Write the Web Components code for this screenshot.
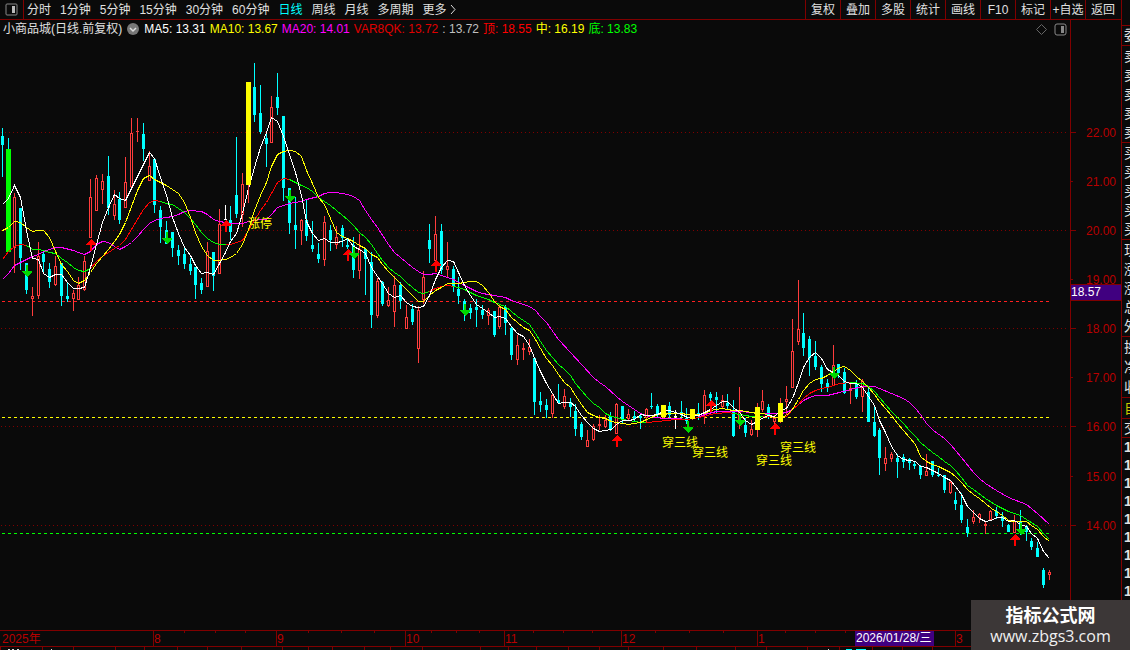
<!DOCTYPE html>
<html lang="zh-CN">
<head>
<meta charset="utf-8">
<title>小商品城 日线</title>
<style>
  body {
    --bg: #0a0a0a;
    --line: #800000;
    --label: #b80000;
    margin: 0;
    background: var(--bg);
    color: #e0e0e0;
    font: 12px/18px "Liberation Sans", "Noto Sans CJK SC", sans-serif;
    overflow: hidden;
  }
</style>
</head>
<body>
<stock-screen>
  <tool-bar slot="toolbar"></tool-bar>
  <indicator-legend slot="legend">
    <span>小商品城(日线.前复权)</span>
  </indicator-legend>
  <kline-plot slot="plot"></kline-plot>
  <price-axis slot="price"></price-axis>
  <date-axis slot="date"></date-axis>
  <quote-strip slot="quotes"></quote-strip>
  <site-badge slot="badge">
    <strong>指标公式网</strong>
    <a slot="link" href="#site">www.zbgs3.com</a>
  </site-badge>
</stock-screen>

<script>
const SVG_NS = "http://www.w3.org/2000/svg";
const STEP = 5.846;
const FIRST_X = 2.95;

// one row per bar: kind, high, body top, body bottom, low
// c = falling, r = rising, g / y = marked bar, w = plain white wick
const BARS = `
c 128 136 145 177|g 138 149 252 252|r 193 197 248 273|c 208 208 258 270|c 263 263 290 294
r 287 296 299 316|r 242 256 296 299|c 251 254 262 272|c 263 269 282 288|r 256 266 285 286
c 263 263 296 306|c 282 296 299 302|r 290 293 299 311|r 277 285 300 300|r 256 261 290 291
r 179 197 238 238|r 175 178 211 211|r 174 181 190 204|c 156 176 208 215|r 190 204 216 220
c 192 199 220 224|r 157 182 208 208|r 118 133 187 187|r 118 131 132 142|c 123 134 149 161
r 151 166 181 181|c 159 159 205 213|c 206 210 227 243|c 221 230 244 244|c 232 232 248 257
c 245 250 256 265|c 248 254 264 269|c 258 264 271 275|c 267 267 285 299|c 278 283 290 294
r 242 251 287 287|c 252 252 276 291|r 209 224 274 274|w 205 205 220 220|c 206 220 232 240
c 137 195 214 218|r 173 184 215 227|y 82 82 185 203|c 63 87 115 122|c 85 113 132 134
c 134 138 144 167|r 96 107 143 143|c 73 97 108 115|c 116 116 188 201|c 188 188 223 234
c 197 225 230 249|r 219 220 231 245|c 199 220 236 241|c 221 245 249 252|c 243 254 259 263
r 216 222 260 266|c 225 230 240 251|r 226 237 245 249|c 225 228 238 247|c 239 245 247 249
c 237 245 270 278|r 234 249 271 279|c 249 249 259 295|c 252 262 315 328|r 278 281 316 318
c 281 282 304 306|r 287 300 306 307|r 276 285 312 327|c 282 285 301 309|r 305 317 329 329
c 304 309 322 325|r 306 310 349 363|r 271 277 300 304|c 224 240 249 263|r 216 234 261 261
c 224 231 270 274|r 242 266 270 277|c 266 269 287 292|c 277 289 296 304|c 299 301 310 321
c 304 308 313 319|c 299 307 310 327|c 305 310 315 319|r 308 310 316 325|c 311 311 335 337
r 305 307 327 329|c 305 307 323 335|c 326 328 355 360|r 335 345 360 365|r 343 348 350 360
r 339 347 352 355|c 358 358 402 415|c 392 401 405 412|c 399 405 410 418|r 394 395 414 418
c 384 400 403 404|r 389 396 407 409|c 398 402 407 417|c 404 411 429 436|c 422 424 437 440
r 430 440 447 447|r 424 426 440 441|r 415 424 426 430|r 415 420 427 428|c 412 416 430 431
r 403 404 434 434|c 406 406 420 424|r 409 414 419 420|c 411 416 419 421|c 414 416 418 429
r 408 409 418 422|c 393 406 407 409|c 404 406 414 417|y 405 405 417 418|c 402 406 415 418
w 410 416 417 429|c 401 412 413 420|c 408 418 421 424|y 409 409 419 420|c 403 413 416 420
r 390 395 415 424|c 392 394 398 412|c 392 397 400 413|r 395 400 407 409|c 394 403 406 410
c 400 410 436 437|r 387 412 424 429|c 418 425 433 437|r 420 429 435 436|y 403 407 430 437
r 390 401 410 412|c 404 407 415 419|r 415 418 422 424|y 398 403 422 423|r 386 399 402 415
r 319 351 388 388|r 280 329 342 345|c 313 333 348 356|c 336 339 358 376|c 341 356 367 370
c 365 367 384 392|c 379 383 387 392|r 345 365 386 386|c 364 364 373 378|c 368 372 393 394
r 382 388 391 404|c 380 383 397 399|r 379 381 397 412|c 386 392 422 422|c 405 422 436 437
c 428 430 458 475|r 447 458 464 471|r 452 454 459 462|c 454 458 462 478|c 454 457 462 468
c 458 459 463 470|c 461 464 466 469|c 465 466 475 479|r 454 471 476 476|c 461 461 475 477
c 468 475 476 477|c 475 475 490 493|r 481 482 493 494|c 492 500 504 510|c 493 505 520 523
c 519 527 533 537|r 510 517 522 524|r 513 514 518 523|r 522 524 526 534|r 510 511 520 520
c 507 511 516 519|c 512 516 521 527|c 524 525 532 532|r 515 521 533 533|c 510 522 530 535
c 525 526 532 541|c 538 541 547 550|c 542 548 557 557|c 568 570 585 588|r 570 572 575 580`
  .trim().split(/[|\n]/).map(row => row.split(" "));

const MA5 = "2,204 8,198 14,185 20,197 26,230 32,258 38,259 43,273 49,277 55,274 61,274 67,282 73,288 78,288 84,287 90,267 96,244 102,222 108,207 114,194 119,198 125,200 131,188 137,176 143,164 149,152 154,158 160,177 166,195 172,217 178,233 184,247 190,255 195,265 201,273 207,272 213,274 219,263 225,252 230,241 236,233 242,213 248,188 254,167 260,147 266,132 271,117 277,121 283,136 289,154 295,172 301,195 306,221 312,233 318,240 324,238 330,242 336,242 342,241 347,238 353,246 359,249 365,253 371,267 377,276 382,283 388,293 394,297 400,295 406,302 412,306 418,307 423,306 429,295 435,279 441,267 447,260 453,261 458,272 464,285 470,295 476,304 482,308 488,312 494,317 499,316 505,318 511,326 517,333 523,336 529,345 535,360 540,371 546,383 552,393 558,403 564,402 570,402 575,406 581,415 587,422 593,428 599,431 605,430 611,429 616,424 622,420 628,420 634,419 640,414 646,415 651,415 657,414 663,411 669,410 675,412 681,414 687,417 692,416 698,415 704,412 710,409 716,405 722,401 727,401 733,407 739,412 745,420 751,424 757,421 763,417 768,415 774,416 780,410 786,408 792,398 798,382 803,367 809,357 815,352 821,358 827,369 833,372 839,376 844,381 850,383 856,383 862,387 868,396 874,405 879,420 885,432 891,446 897,455 903,459 909,460 915,461 920,466 926,467 932,470 938,473 944,477 950,480 955,486 961,494 967,506 973,512 979,518 985,521 991,520 996,517 1002,517 1008,521 1014,520 1020,524 1026,526 1031,533 1037,538 1043,551 1049,558";
const MA10 = "2,230 8,227 14,221 20,222 26,227 32,231 38,230 43,230 49,237 55,251 61,264 67,271 73,280 78,283 84,280 90,272 96,263 102,256 108,249 114,241 119,234 125,222 131,206 137,190 143,178 149,175 154,179 160,182 166,185 172,189 178,193 184,202 190,217 195,232 201,246 207,255 213,260 219,260 225,259 230,257 236,253 242,244 248,229 254,210 260,195 266,182 271,166 277,154 283,151 289,150 295,151 301,156 306,170 312,183 318,197 324,204 330,218 336,232 342,236 347,238 353,241 359,245 365,248 371,254 377,257 382,264 388,271 394,277 400,283 406,289 412,295 418,301 423,301 429,295 435,290 441,287 447,283 458,283 464,282 470,281 476,281 482,285 488,292 494,301 499,306 505,309 511,317 517,322 523,327 529,330 535,339 540,348 546,358 552,365 558,374 564,382 570,387 575,395 581,404 587,412 593,415 599,417 605,418 611,421 616,422 622,423 628,424 634,423 640,422 646,419 651,417 657,414 663,414 669,413 681,413 687,414 698,414 704,413 710,410 716,409 722,408 727,409 733,410 739,410 745,411 751,412 757,413 763,413 768,415 774,417 780,417 786,415 792,409 798,399 803,390 809,383 815,379 821,378 827,375 833,371 839,367 844,366 850,370 856,376 862,381 868,387 874,394 879,401 885,408 891,415 897,423 903,430 909,437 915,444 920,456 926,461 932,464 938,466 944,469 950,472 955,476 961,482 967,489 973,494 979,498 985,503 991,508 996,511 1002,515 1008,520 1014,521 1026,521 1031,525 1037,529 1043,536 1049,541";
const MA20 = "2,279 8,273 14,265 20,262 26,259 32,256 38,254 43,251 49,249 55,247 61,247 73,250 78,252 84,254 90,251 96,244 102,241 108,242 114,246 119,249 125,246 131,242 137,236 143,229 149,223 154,220 160,218 172,216 178,214 184,211 190,210 201,211 207,214 213,219 219,221 225,222 230,223 242,223 248,221 254,220 260,219 266,219 271,214 277,207 283,205 289,203 301,201 306,199 318,196 324,193 330,192 336,192 347,194 353,196 359,200 365,210 371,219 377,227 388,244 394,252 400,257 412,267 418,271 423,274 429,274 435,273 441,275 453,279 464,285 476,291 482,293 494,295 505,297 511,300 523,304 529,306 535,310 540,316 546,322 558,339 570,352 581,364 593,377 599,382 605,386 616,396 622,401 628,405 634,409 640,413 646,415 651,417 657,417 663,418 675,418 687,419 698,417 704,414 716,411 727,411 739,411 751,412 763,413 780,413 786,412 792,409 798,404 803,400 809,397 815,395 827,395 839,392 850,389 862,386 874,386 879,388 891,393 903,398 909,402 915,408 920,414 926,423 933,430 944,438 950,444 961,457 973,472 979,478 985,483 996,490 1008,497 1026,504 1037,513 1049,524";
// the trend line changes colour each time it turns
const TREND = [
  ["#f00", "2,259 8,251 14,246 20,244 26,245"],
  ["#0f0", "26,245 32,249 38,249 43,250 49,252 55,253 61,258 67,262 73,267 78,270 84,271 90,268"],
  ["#f00", "90,268 96,261 102,256 108,252 114,248 119,245 125,239 131,229 137,219 143,209 149,202 154,200 160,201"],
  ["#0f0", "160,201 166,203 172,204 178,208 184,212 190,218 195,224 201,232 207,238 213,242 219,244 225,244"],
  ["#f00", "225,244 230,244 236,242 242,240 248,230 254,220 260,210 266,202 271,193 277,182 283,178 289,179"],
  ["#0f0", "289,179 295,182 301,185 306,187 312,191 318,197 324,201 330,205 336,210 342,215 347,219 353,225 359,232 365,237 371,244 377,253 382,260 388,267 394,272 400,276 406,282 412,287 418,292 423,293 429,291"],
  ["#f00", "429,291 435,288 441,286 447,285 453,286"],
  ["#0f0", "453,286 458,287 464,289 476,295 488,299 494,302 505,306 511,311 517,316 523,320 529,324 535,333 540,341 546,350 552,357 558,364 564,369 570,375 575,383 581,390 587,397 593,403 599,407 605,413 611,416 616,417 622,419 628,420 634,421 640,422 646,422"],
  ["#f00", "646,422 657,421 675,419 687,419 698,417 704,416 710,414 716,413 727,412 733,413"],
  ["#0f0", "733,413 739,414 745,415 751,416 763,416"],
  ["#f00", "763,416 780,417 786,416 792,409 798,404 803,398 809,393 815,390 821,388 827,387 833,385 839,383 850,382"],
  ["#0f0", "850,382 862,383 868,386 874,391 879,397 885,404 891,411 897,417 903,423 909,430 915,436 920,442 926,447 932,452 938,456 944,461 950,465 955,470 961,477 967,485 973,489 985,498 996,505 1008,511 1014,513 1020,515 1026,519 1037,526 1043,533 1049,539"]
];

const LEVELS = [[301, "#ff2020"], [417, "#ffff00"], [533, "#00ff00"]];
const BUYS = [[91, 239], [226, 220], [348, 249], [436, 260], [617, 435], [711, 400], [775, 423], [1015, 534]];
const SELLS = [[27, 277], [167, 244], [290, 202], [354, 259], [465, 316], [688, 433], [740, 426], [834, 379], [1021, 535]];
const NOTES = [[248, 228, "涨停"], [662, 447, "穿三线"], [692, 457, "穿三线"], [756, 465, "穿三线"], [780, 452, "穿三线"]];
const PRICES = [[132, "22.00"], [181, "21.00"], [230, "20.00"], [279, "19.00"], [328, "18.00"], [377, "17.00"], [426, "16.00"], [476, "15.00"], [525, "14.00"]];
const MONTHS = [[153, "8"], [276, "9"], [405, "10"], [504, "11"], [621, "12"], [757, "1"], [955, "3"]];
const WEEK_TICKS = [184, 215, 245, 308, 341, 374, 431, 456, 479, 533, 563, 592, 655, 689, 723, 785, 815, 845];
const TAB_TICKS = [0, 42, 73, 115, 144, 177, 207, 241, 282, 308, 332, 364, 390, 422, 480, 508, 536, 568, 599, 628, 663, 696, 735, 766, 807, 839, 872, 902, 932];

const svgNode = (name, attrs, text = "") => {
  const node = document.createElementNS(SVG_NS, name);
  Object.entries(attrs).forEach(([key, value]) => node.setAttribute(key, value));
  node.textContent = text;
  return node;
};

class StockScreen extends HTMLElement {
  constructor() {
    super();
    this.attachShadow({ mode: "open" });
  }

  static get styles() {
    return /* css */`
      :host {
        display: grid;
        grid-template-columns: 1fr 9px;
        height: 100vh;
        position: relative;
      }

      main {
        display: flex;
        flex-direction: column;
        min-width: 0;
        min-height: 0;
      }

      .chart {
        flex: 1;
        display: grid;
        grid-template-columns: 1fr 51px;
        min-height: 0;
      }

      .left {
        display: flex;
        flex-direction: column;
        min-width: 0;
        min-height: 0;
      }
    `;
  }

  connectedCallback() {
    this.shadowRoot.innerHTML = /* html */`
    <style>${StockScreen.styles}</style>
    <main>
      <slot name="toolbar"></slot>
      <div class="chart">
        <div class="left">
          <slot name="legend"></slot>
          <slot name="plot"></slot>
        </div>
        <slot name="price"></slot>
      </div>
      <slot name="date"></slot>
    </main>
    <slot name="quotes"></slot>
    <slot name="badge"></slot>`;
  }
}

class ToolBar extends HTMLElement {
  constructor() {
    super();
    this.attachShadow({ mode: "open" });
  }

  static get styles() {
    return /* css */`
      :host {
        display: flex;
        justify-content: space-between;
        height: 19px;
        border-bottom: 1px solid var(--line);
      }

      button {
        padding: 0;
        border: 0;
        background: none;
        color: inherit;
        font: inherit;
        white-space: nowrap;
      }

      nav {
        display: flex;
        gap: 9px;
      }

      .panel {
        width: 24px;
        padding-left: 5px;
        border-right: 1px solid var(--line);
        box-sizing: border-box;
        display: flex;
        align-items: center;
        margin-right: -6px;
      }

      .active {
        color: #00ffff;
      }

      .more {
        display: flex;
        align-items: center;
        gap: 3px;
      }

      .tools button {
        width: 35px;
        border-left: 1px solid var(--line);
      }

      .tools {
        gap: 0;
        padding-right: 1px;
      }
    `;
  }

  connectedCallback() {
    const periods = ["分时", "1分钟", "5分钟", "15分钟", "30分钟", "60分钟", "日线", "周线", "月线", "多周期"];
    const tools = ["复权", "叠加", "多股", "统计", "画线", "F10", "标记", "+自选", "返回"];
    this.shadowRoot.innerHTML = /* html */`
    <style>${ToolBar.styles}</style>
    <nav>
      <button class="panel" aria-label="侧栏">
        <svg width="13" height="13" fill="none" stroke="#888"><rect x="1" y="1" width="11" height="11" rx="1"/><path d="M7 3h3v7h-3z" fill="#bbb" stroke="none"/></svg>
      </button>
      ${periods.map(name => `<button${name === "日线" ? ' class="active"' : ""}>${name}</button>`).join("")}
      <button class="more">更多<svg width="7" height="11" fill="none" stroke="#ddd"><path d="M1 1l4 4.500-4 4.500"/></svg></button>
    </nav>
    <nav class="tools">
      ${tools.map(name => `<button>${name}</button>`).join("")}
    </nav>`;
  }
}

class IndicatorLegend extends HTMLElement {
  constructor() {
    super();
    this.attachShadow({ mode: "open" });
  }

  static get styles() {
    return /* css */`
      :host {
        display: flex;
        align-items: center;
        gap: 4px;
        height: 18px;
        padding: 0 3px 2px;
        white-space: nowrap;
      }

      button {
        display: flex;
        padding: 0;
        border: 0;
        background: none;
      }

      .tail {
        display: flex;
        gap: 6px;
        margin-left: auto;
      }
    `;
  }

  connectedCallback() {
    const items = [
      ["MA5: 13.31", "#ffffff"],
      ["MA10: 13.67", "#ffff00"],
      ["MA20: 14.01", "#ff00ff"],
      ["VAR8QK: 13.72", "#e00000"],
      [": 13.72", "#c0c0c0"],
      ["顶: 18.55", "#ff0000"],
      ["中: 16.19", "#ffff00"],
      ["底: 13.83", "#00ff00"]
    ];
    this.shadowRoot.innerHTML = /* html */`
    <style>${IndicatorLegend.styles}</style>
    <slot></slot>
    <button aria-label="展开"><svg width="14" height="14"><circle cx="7" cy="7" r="6" fill="#777"/><path d="M4 6l3 3 3-3" fill="none" stroke="#ddd" stroke-width="1.500"/></svg></button>
    ${items.map(([text, color]) => `<span style="color:${color}">${text}</span>`).join("")}
    <div class="tail">
      <button aria-label="标记"><svg width="13" height="13" fill="none" stroke="#666"><path d="M6.500 1.500l5 5-5 5-5-5z"/></svg></button>
      <button aria-label="侧栏"><svg width="13" height="13" fill="none" stroke="#888"><rect x="1" y="1" width="11" height="11" rx="2"/><path d="M7 3h3v7h-3z" fill="#888" stroke="none"/></svg></button>
    </div>`;
  }
}

class KlinePlot extends HTMLElement {
  constructor() {
    super();
    this.attachShadow({ mode: "open" });
  }

  static get styles() {
    return /* css */`
      :host {
        display: block;
        flex: 1;
        min-height: 0;
      }

      svg {
        display: block;
        width: 100%;
        height: 100%;
      }

      text {
        fill: #ffff00;
      }
    `;
  }

  connectedCallback() {
    this.shadowRoot.innerHTML = /* html */`
    <style>${KlinePlot.styles}</style>
    <svg viewBox="0 40 1070 590" preserveAspectRatio="xMinYMin meet" shape-rendering="crispEdges"></svg>`;
    this.svg = this.shadowRoot.querySelector("svg");
    this.drawGrid();
    BARS.forEach((bar, i) => this.drawBar(bar, ~~(FIRST_X + STEP * i)));
    this.drawLine(MA20, "#ff00ff");
    TREND.forEach(([color, points]) => this.drawLine(points, color));
    this.drawLine(MA10, "#ffff00");
    this.drawLine(MA5, "#ffffff");
    BARS.forEach((bar, i) => {
      if (bar[0] === "y") this.drawBar(bar, ~~(FIRST_X + STEP * i));
    });
    BUYS.forEach(([x, y]) => this.drawArrow(x, y, 1, "#ff0000"));
    SELLS.forEach(([x, y]) => this.drawArrow(x, y, -1, "#00d800"));
    NOTES.forEach(([x, y, text]) => this.svg.append(svgNode("text", { x, y }, text)));
  }

  box(x, y, width, height, fill) {
    if (height > 0) this.svg.append(svgNode("rect", { x, y, width, height, fill }));
  }

  drawGrid() {
    for (const y of [132, 230, 328, 426, 525]) {
      this.svg.append(svgNode("path", { d: `M1 ${y + 0.5}H1068`, stroke: "#800000", "stroke-dasharray": "1 3" }));
    }
    for (const [y, stroke] of LEVELS) {
      this.svg.append(svgNode("path", { d: `M2 ${y + 0.5}H1050`, stroke, "stroke-dasharray": "3 3" }));
    }
  }

  drawBar([kind, ...values], x) {
    const [high, top, bottom, low] = values.map(Number);
    const marked = kind === "g" || kind === "y";
    const wick = { c: "#00ffff", g: "#00ffff", w: "#ffffff" }[kind] || "#ff3c3c";
    const body = { c: "#00ffff", g: "#00ff00", y: "#ffff00", w: "#ffffff" }[kind] || wick;
    this.box(x, high, 1, low - high, wick);
    if (kind === "w") {
      this.box(x - 1, bottom - 1, 3, 1, body);
      return;
    }
    this.box(x - (marked ? 2 : 1), top, marked ? 5 : 3, Math.max(bottom - top, 1), body);
    if (kind === "r") this.box(x, top + 1, 1, bottom - top - 2, "#0a0a0a");
  }

  drawLine(points, stroke) {
    this.svg.append(svgNode("polyline", { points, stroke, fill: "none", transform: "translate(0.5 0.5)" }));
  }

  drawArrow(x, y, dir, fill) {
    const d = `M${x} ${y}l5 ${5 * dir}v${dir}h-4v${6 * dir}h-2v${-6 * dir}h-4v${-dir}z`;
    this.svg.append(svgNode("path", { d, fill }));
  }
}

class PriceAxis extends HTMLElement {
  constructor() {
    super();
    this.attachShadow({ mode: "open" });
  }

  static get styles() {
    return /* css */`
      :host {
        display: block;
        border-left: 1px solid var(--line);
        min-height: 0;
      }

      svg {
        display: block;
        width: 100%;
        height: 100%;
      }

      text {
        fill: var(--label);
      }

      .now {
        fill: #ffffff;
      }
    `;
  }

  connectedCallback() {
    this.shadowRoot.innerHTML = /* html */`
    <style>${PriceAxis.styles}</style>
    <svg viewBox="0 20 50 610" preserveAspectRatio="xMinYMin meet">
      ${PRICES.map(([y, text], i) => `
        <rect y="${y}" width="${i % 2 ? 2 : 5}" height="1" fill="#800000"/>
        <text x="15" y="${y + 5}">${text}</text>`).join("")}
      <rect y="284" width="50" height="17" fill="#800000"/>
      <rect y="285" width="50" height="15" fill="#400080"/>
      <text class="now" x="0" y="296">18.57</text>
    </svg>`;
  }
}

class DateAxis extends HTMLElement {
  constructor() {
    super();
    this.attachShadow({ mode: "open" });
  }

  static get styles() {
    return /* css */`
      :host {
        display: block;
        height: 20px;
      }

      svg {
        display: block;
        width: 100%;
        height: 100%;
      }

      text {
        fill: var(--label);
      }

      .rule {
        fill: var(--line);
      }

      .now {
        fill: #ffffff;
      }
    `;
  }

  connectedCallback() {
    this.shadowRoot.innerHTML = /* html */`
    <style>${DateAxis.styles}</style>
    <svg viewBox="0 0 1121 20" preserveAspectRatio="xMinYMin meet">
      <g class="rule">
        <rect width="1121" height="1"/>
        <rect y="16" width="1121" height="1"/>
        ${MONTHS.map(([x]) => `<rect x="${x}" width="1" height="16"/>`).join("")}
        ${WEEK_TICKS.map(x => `<rect x="${x}" width="1" height="3"/>`).join("")}
        ${TAB_TICKS.map(x => `<rect x="${x}" y="17" width="1" height="3"/>`).join("")}
      </g>
      <path d="M8 19.500h2M12 19.500h2M17 19.500h2M51 19.500h1M828 19.500h1" stroke="#ddd"/>
      <path d="M846 19.500h6M856 19.500h10" stroke="#00ffff"/>
      <text x="2" y="13">2025年</text>
      ${MONTHS.map(([x, text]) => `<text x="${x + 1}" y="13">${text}</text>`).join("")}
      <rect x="855" y="1" width="79" height="15" fill="#400080"/>
      <text class="now" x="856" y="12">2026/01/28/三</text>
    </svg>`;
  }
}

class QuoteStrip extends HTMLElement {
  constructor() {
    super();
    this.attachShadow({ mode: "open" });
  }

  static get styles() {
    return /* css */`
      :host {
        display: block;
        border-left: 1px solid var(--line);
        overflow: hidden;
        font-size: 14px;
        line-height: 19px;
        min-height: 0;
      }

      div {
        padding-left: 2px;
        border-bottom: 1px solid var(--line);
      }

      .top {
        height: 25px;
      }

      span {
        display: block;
        width: 14px;
      }

      .list {
        padding-top: 1px;
      }

      .wide,
      .own {
        line-height: 20px;
      }

      .own {
        color: #c8c800;
      }

      .trades {
        line-height: 18px;
      }

      .ticks {
        border: 0;
        font-weight: bold;
        line-height: 18px;
      }
    `;
  }

  connectedCallback() {
    const groups = [["", "委"], ["list", "卖卖卖卖卖"], ["list", "买买买买买"], ["list", "现涨涨总外"], ["wide", "换净收"], ["own", "自"], ["trades", "交"], ["ticks", "111111111"]];
    this.shadowRoot.innerHTML = /* html */`
    <style>${QuoteStrip.styles}</style>
    <div class="top"></div>
    ${groups.map(([name, chars]) => `<div class="${name}">${[...chars].map(c => `<span>${c}</span>`).join("")}</div>`).join("")}`;
  }
}

class SiteBadge extends HTMLElement {
  constructor() {
    super();
    this.attachShadow({ mode: "open" });
  }

  static get styles() {
    return /* css */`
      :host {
        position: absolute;
        right: 0;
        bottom: 0;
        display: flex;
        flex-direction: column;
        align-items: center;
        width: 159px;
        height: 50px;
        padding-top: 6px;
        box-sizing: border-box;
        background: #3c3737;
        color: #ffffff;
        font-size: 18px;
        line-height: 20px;
      }

      ::slotted(a) {
        color: #f0f0f0;
        font: 16px/20px "Open Sans", sans-serif;
        text-decoration: none;
      }
    `;
  }

  connectedCallback() {
    this.shadowRoot.innerHTML = /* html */`
    <style>${SiteBadge.styles}</style>
    <slot></slot>
    <slot name="link"></slot>`;
  }
}

customElements.define("stock-screen", StockScreen);
customElements.define("tool-bar", ToolBar);
customElements.define("indicator-legend", IndicatorLegend);
customElements.define("kline-plot", KlinePlot);
customElements.define("price-axis", PriceAxis);
customElements.define("date-axis", DateAxis);
customElements.define("quote-strip", QuoteStrip);
customElements.define("site-badge", SiteBadge);
</script>
</body>
</html>
